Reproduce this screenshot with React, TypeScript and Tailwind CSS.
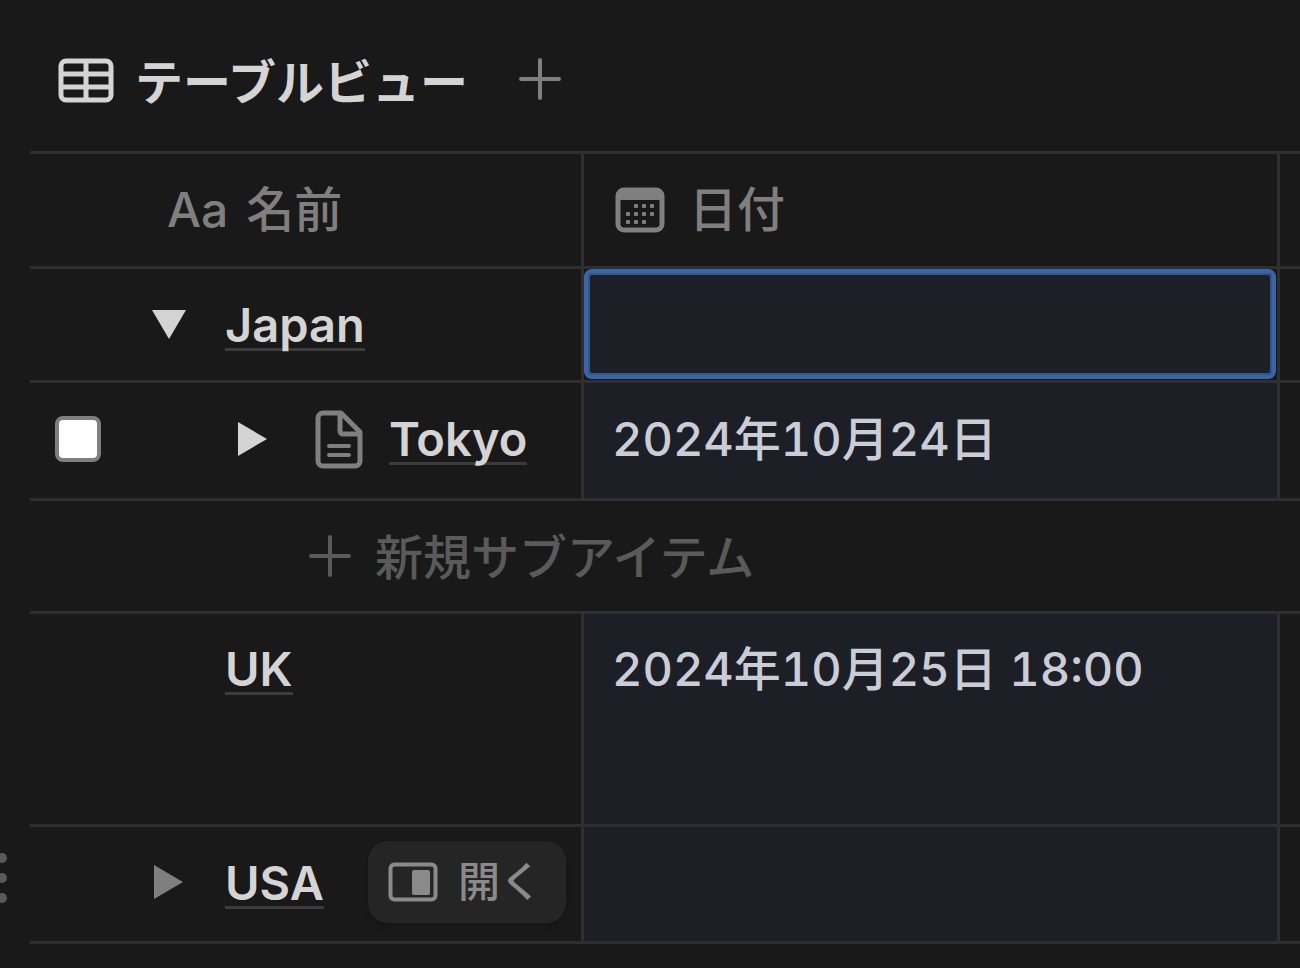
import React from 'react';

const PlusIcon: React.FC = () => (
  <svg width="42" height="42" viewBox="0 0 42 42" fill="none" stroke="currentColor" strokeWidth="4" strokeLinecap="round">
    <path d="M21 2v38M2 21h38" />
  </svg>
);

const TableIcon: React.FC = () => (
  <svg width="56" height="46" viewBox="0 0 56 46" fill="none" stroke="currentColor" strokeWidth="5">
    <rect x="3" y="3" width="50" height="39" rx="5" />
    <path d="M3 16h50M3 29h50M28 3v39" />
  </svg>
);

const CalendarIcon: React.FC = () => {
  const dots = [
    [21, 19], [29, 19], [37, 19],
    [13, 27], [21, 27], [29, 27], [37, 27],
    [13, 35], [21, 35], [29, 35],
  ];
  return (
    <svg width="50" height="46" viewBox="0 0 50 46" fill="none">
      <rect x="3" y="3" width="44" height="40" rx="6" stroke="currentColor" strokeWidth="5" />
      <path d="M3 5h44v8H3z" fill="currentColor" />
      {dots.map(([x, y]) => (
        <rect key={`${x}-${y}`} x={x - 2} y={y - 2} width="4" height="4" rx="1" fill="currentColor" />
      ))}
    </svg>
  );
};

const PageIcon: React.FC = () => (
  <svg width="60" height="60" viewBox="0 0 60 60" fill="none" stroke="currentColor" strokeLinecap="round" strokeLinejoin="round">
    <path d="M14 4h18l19 19v29a5 5 0 0 1-5 5H14a5 5 0 0 1-5-5V9a5 5 0 0 1 5-5z" strokeWidth="5" />
    <path d="M31 5v17a3 3 0 0 0 3 3h16" strokeWidth="5" />
    <path d="M20 37h20M20 46h20" strokeWidth="4" />
  </svg>
);

const SidePeekIcon: React.FC = () => (
  <svg width="50" height="40" viewBox="0 0 50 40" fill="none">
    <rect x="2.5" y="2.5" width="45" height="35" rx="4" stroke="currentColor" strokeWidth="4" />
    <rect x="24" y="8" width="18" height="25" rx="2" fill="currentColor" />
  </svg>
);

const Toggle: React.FC<{ label: string; open?: boolean; className?: string }> = ({ label, open, className = '' }) => (
  <button type="button" aria-label={label} aria-expanded={!!open} className={`mb-1 shrink-0 ${className}`}>
    <svg width="34" height="34" viewBox="0 0 34 34" fill="currentColor">
      {open ? <path d="M0 2h34L17 31z" /> : <path d="M2 0v34l29-17z" />}
    </svg>
  </button>
);

const PageLink: React.FC<{ children: React.ReactNode }> = ({ children }) => (
  <a href="#" className="border-b-3 border-[#3b3b3b] font-semibold leading-[46px] text-[#d4d4d4]">
    {children}
  </a>
);

const nameCell = 'border-t-3 border-r-3 border-[#2f2f2f] p-0';
const dateCell = 'border-t-3 border-r-3 border-[#2f2f2f] bg-[#1d1f27] p-0';
const restCell = 'border-t-3 border-[#2f2f2f] p-0';
const dateText = 'px-7 font-medium leading-[46px] tabular-nums text-[#cbcdd6]';

export default function App() {
  return (
    <main className="min-h-screen overflow-hidden bg-[#191919] pl-[30px] font-['Inter','Noto_Sans_CJK_JP',sans-serif] text-[48px] text-[#d4d4d4]">
      {/* View tabs */}
      <div className="flex h-[151px] items-center pt-2.5 pl-7">
        <button type="button" className="flex items-center gap-[21px] font-semibold leading-[46px]">
          <TableIcon />
          <span className="pt-1">テーブルビュー</span>
        </button>
        <button type="button" aria-label="ビューを追加" className="mb-1 ml-[51px] text-[#7f7f7f]">
          <PlusIcon />
        </button>
      </div>

      <table className="w-full table-fixed border-separate border-spacing-0 text-left text-[47px]">
        <colgroup>
          <col className="w-[554px]" />
          <col className="w-[696px]" />
          <col />
        </colgroup>
        <thead>
          <tr className="h-[115px] text-[48px] text-[#7f7f7f]">
            <th className={nameCell}>
              <div className="flex items-center gap-[18px] pl-[137px] font-medium leading-[46px]">
                <span>Aa</span>
                <span>名前</span>
              </div>
            </th>
            <th className={nameCell}>
              <div className="flex items-center gap-6 pl-[31px] font-medium leading-[46px]">
                <CalendarIcon />
                日付
              </div>
            </th>
            <th className={restCell} />
          </tr>
        </thead>
        <tbody>
          <tr className="h-[114px]">
            <td className={nameCell}>
              <div className="flex items-center gap-[39px] pt-1 pl-[122px]">
                <Toggle label="Japan を閉じる" open />
                <PageLink>Japan</PageLink>
              </div>
            </td>
            <td className="h-[114px] border-t-3 border-r-3 border-[#2f2f2f] p-0">
              <div className="mr-px mb-px h-[110px] rounded-lg border-4 border-[#3767aa] bg-[#1d1f27] inset-shadow-[0_0_0_2px_#34578c]" />
            </td>
            <td className={restCell} />
          </tr>
          <tr className="h-[118px]">
            <td className={nameCell}>
              <div className="flex items-center">
                <input
                  type="checkbox"
                  aria-label="Tokyo を選択"
                  className="mb-1 ml-[25px] size-[46px] shrink-0 appearance-none rounded-lg border-4 border-[#7f7f7f] bg-white"
                />
                <Toggle label="Tokyo を開く" className="ml-[135px]" />
                <span className="mb-1 ml-[39px] text-[#7f7f7f]">
                  <PageIcon />
                </span>
                <div className="ml-5 flex">
                  <PageLink>Tokyo</PageLink>
                </div>
              </div>
            </td>
            <td className={dateCell}>
              <div className={`pb-1 ${dateText}`}>2024年10月24日</div>
            </td>
            <td className={restCell} />
          </tr>
          <tr className="h-[113px]">
            <td colSpan={3} className={restCell}>
              <button type="button" className="ml-[279px] flex items-center gap-6 text-[48px] font-medium leading-[46px] text-[#5a5a5a]">
                <PlusIcon />
                <span className="pt-1">新規サブアイテム</span>
              </button>
            </td>
          </tr>
          <tr className="h-[213px] align-top">
            <td className={nameCell}>
              <div className="flex pt-8 pl-[195px]">
                <PageLink>UK</PageLink>
              </div>
            </td>
            <td className={dateCell}>
              <div className={`pt-8 ${dateText}`}>2024年10月25日 18:00</div>
            </td>
            <td className={restCell} />
          </tr>
          <tr className="h-[120px]">
            <td className={`border-b-3 ${nameCell}`}>
              <div className="relative flex items-center gap-[39px] pl-[122px]">
                {/* Drag handle hangs in the page margin */}
                <button type="button" aria-label="ドラッグして移動" className="absolute -left-[53px] mb-3 text-[#5a5a5a]">
                  <svg width="30" height="52" viewBox="0 0 30 52" fill="currentColor">
                    <circle cx="5" cy="6" r="5" />
                    <circle cx="5" cy="26" r="5" />
                    <circle cx="5" cy="46" r="5" />
                    <circle cx="25" cy="6" r="5" />
                    <circle cx="25" cy="26" r="5" />
                    <circle cx="25" cy="46" r="5" />
                  </svg>
                </button>
                <Toggle label="USA を開く" className="text-[#7f7f7f]" />
                <PageLink>USA</PageLink>
                <button
                  type="button"
                  className="mr-[15px] mb-1 ml-auto flex h-[82px] items-center gap-5 rounded-[20px] bg-[#252525] pr-6 pl-5 text-[42px] font-medium leading-[46px] text-[#8a8a8a] shadow-md"
                >
                  <SidePeekIcon />
                  開く
                </button>
              </div>
            </td>
            <td className={`border-b-3 ${dateCell}`} />
            <td className={`border-b-3 ${restCell}`} />
          </tr>
        </tbody>
      </table>
    </main>
  );
}
